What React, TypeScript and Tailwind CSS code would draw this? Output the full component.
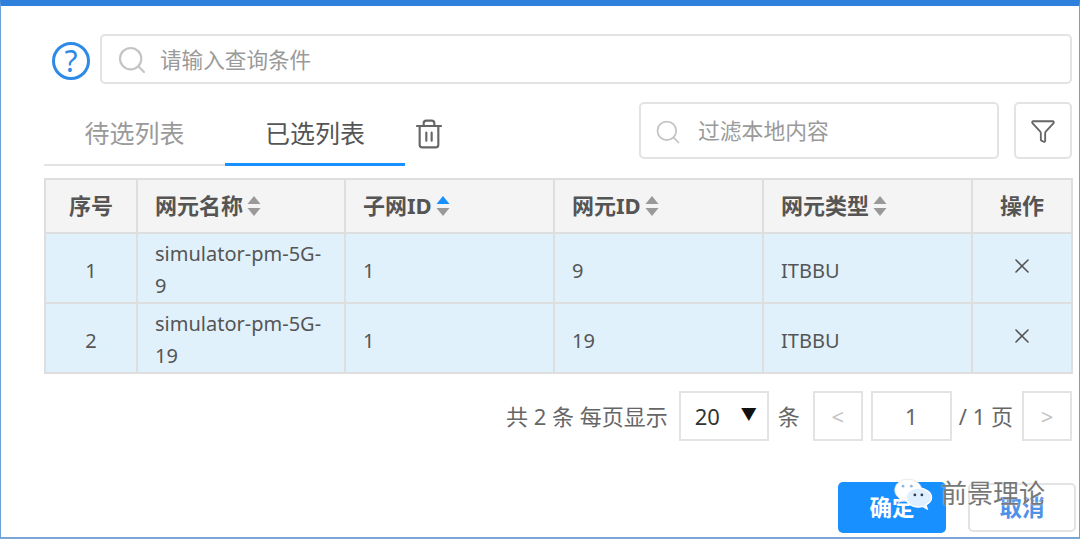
import { Search, Filter, X, Trash2 } from "lucide-react";

const font = { fontFamily: '"Noto Sans", "Noto Sans CJK SC", sans-serif' };

const SortIcon = ({ active = false }: { active?: boolean }) => (
  <svg width="14" height="22" viewBox="0 0 14 22" className="ml-[4px] mb-[-1px] shrink-0">
    <path d="M7 1 L13.5 9 H0.5 Z" fill={active ? "#1890ff" : "#999999"} />
    <path d="M7 21 L13.5 13 H0.5 Z" fill="#999999" />
  </svg>
);

const HeadCell = ({ label, active }: { label: string; active?: boolean }) => (
  <th className="border-2 border-[#dedede] px-[17px] pb-[2px] text-left font-bold">
    <div className="flex items-center">
      <span>{label}</span>
      <SortIcon active={active} />
    </div>
  </th>
);

const rows = [
  { no: "1", name: "simulator-pm-5G-", tail: "9", subnet: "1", id: "9" },
  { no: "2", name: "simulator-pm-5G-", tail: "19", subnet: "1", id: "19" },
];

export default function App() {
  return (
    <div
      className="relative flex h-[539px] w-[1080px] flex-col overflow-hidden border-x-[1.5px] border-b-2 border-t-[6px] border-x-[#6f9fd4] border-b-[#7ba6d6] border-t-[#2f80dc] bg-white pl-[43px] pr-[7px] text-[22px] text-[#555555]"
      style={font}
    >
      {/* search */}
      <div className="mt-[28px] flex items-center">
        <div className="ml-[8px] mt-[3px] flex h-[38px] w-[38px] shrink-0 items-center justify-center rounded-full border-[3px] border-[#2d8ae6] text-[30px] leading-none text-[#2d8ae6]">
          ?
        </div>
        <div className="ml-[10px] flex h-[50px] flex-1 items-center rounded-[5px] border-2 border-[#e3e3e3] pl-[14px] pt-[2px]">
          <Search className="h-[32px] w-[32px] text-[#c4c4c4]" strokeWidth={1.6} />
          <span className="ml-[12px] text-[21.6px] text-[#9a9a9a]">请输入查询条件</span>
        </div>
      </div>

      {/* tabs + filter */}
      <div className="mt-[18px] flex items-start">
        <div className="flex h-[64px] shrink-0 flex-col">
          <div className="flex h-[61px] items-center pt-[2px]">
            <div className="flex w-[181px] justify-center text-[25px] text-[#9a9a9a]">待选列表</div>
            <div className="flex w-[180px] justify-center text-[25px] text-[#555555]">已选列表</div>
          </div>
          <div className="flex">
            <div className="mt-px h-[2px] w-[181px] bg-[#e3e3e3]" />
            <div className="h-[3px] w-[180px] bg-[#1890ff]" />
          </div>
        </div>
        <Trash2 className="ml-[8px] mt-[16px] h-[32px] w-[32px] shrink-0 text-[#666666]" strokeWidth={1.6} />
        <div className="ml-[194px] flex h-[57px] w-[360px] shrink-0 items-center rounded-[5px] border-2 border-[#e3e3e3] pl-[13px] pt-[2px]">
          <Search className="h-[28px] w-[28px] text-[#c4c4c4]" strokeWidth={1.5} />
          <span className="ml-[16px] text-[21.8px] text-[#9a9a9a]">过滤本地内容</span>
        </div>
        <div className="ml-[15px] flex h-[57px] w-[58px] shrink-0 items-center justify-center rounded-[5px] border-2 border-[#e3e3e3]">
          <Filter className="h-[26px] w-[26px] text-[#666666]" strokeWidth={1.7} />
        </div>
      </div>

      {/* table */}
      <table className="mt-[12px] w-[1027px] table-fixed border-collapse text-[#555555]">
        <colgroup>
          <col className="w-[92px]" />
          <col className="w-[208px]" />
          <col className="w-[209px]" />
          <col className="w-[209px]" />
          <col className="w-[209px]" />
          <col className="w-[100px]" />
        </colgroup>
        <thead>
          <tr className="h-[54px] bg-[#f4f4f4]">
            <th className="border-2 border-[#dedede] pb-[2px] text-center font-bold">序号</th>
            <HeadCell label="网元名称" />
            <HeadCell label="子网ID" active />
            <HeadCell label="网元ID" />
            <HeadCell label="网元类型" />
            <th className="border-2 border-[#dedede] pb-[2px] text-center font-bold">操作</th>
          </tr>
        </thead>
        <tbody className="text-[20px]">
          {rows.map((r) => (
            <tr key={r.no} className="h-[70px] bg-[#e1f1fc]">
              <td className="border-2 border-[#dedede] pt-[6px] text-center">{r.no}</td>
              <td className="whitespace-nowrap border-2 border-[#dedede] px-[17px] pt-[4px] text-[20px] leading-[32px]">
                {r.name}
                <br />
                {r.tail}
              </td>
              <td className="border-2 border-[#dedede] px-[17px] pt-[6px]">{r.subnet}</td>
              <td className="border-2 border-[#dedede] px-[17px] pt-[6px]">{r.id}</td>
              <td className="border-2 border-[#dedede] px-[17px] pt-[6px]">ITBBU</td>
              <td className="border-2 border-[#dedede] pb-[5px]">
                <X className="mx-auto h-[24px] w-[24px] text-[#555555]" strokeWidth={1.6} />
              </td>
            </tr>
          ))}
        </tbody>
      </table>

      {/* pagination */}
      <div className="mt-[17px] flex items-center justify-end text-[#666666]">
        <span>共 2 条 每页显示</span>
        <div className="ml-[11px] flex h-[50px] w-[90px] items-center justify-between border-2 border-[#e3e3e3] pl-[14px] pr-[10px] text-[#333333]">
          <span>20</span>
          <span className="mb-[4px] text-[16px] text-[#111111]">▼</span>
        </div>
        <span className="ml-[9px]">条</span>
        <div className="ml-[13px] flex h-[50px] w-[50px] items-center justify-center border-2 border-[#e3e3e3] text-[#c4c4c4]">&lt;</div>
        <div className="ml-[8px] flex h-[50px] w-[81px] items-center justify-center border-2 border-[#e3e3e3]">1</div>
        <span className="ml-[7px]">/ 1 页</span>
        <div className="ml-[9px] flex h-[50px] w-[50px] items-center justify-center border-2 border-[#e3e3e3] text-[#c4c4c4]">&gt;</div>
      </div>

      {/* actions */}
      <div className="mr-[-4px] mt-[41px] flex items-center justify-end">
        <button className="h-[51px] w-[108px] rounded-[5px] bg-[#1890ff] text-[22.5px] font-bold text-white" style={font}>确定</button>
        <button className="ml-[22px] h-[49px] w-[108px] rounded-[5px] border-2 border-[#e3e3e3] text-[22.5px] font-bold text-[#4f90e8]" style={font}>取消</button>
      </div>

      {/* watermark */}
      <div className="absolute left-[892px] top-[468px] flex items-center">
        <svg width="42" height="32" viewBox="0 0 48 36">
          <path d="M17 1C8.5 1 2 6.5 2 13.5c0 4 2 7 5.5 9.5L6 28l6-3c2 .6 4 .9 6 .9 8 0 15-5.500 15-12.400S25.500 1 17 1Z" fill="#ffffff" stroke="#dddddd" strokeWidth="0.8" />
          <circle cx="11.500" cy="9" r="1.500" fill="#8cb4dc" />
          <circle cx="21" cy="9" r="1.500" fill="#8cb4dc" />
          <path d="M29 11c-8 0-14 5-14 11s6 11 14 11c1.800 0 3.500-.3 5-.8l5 2.800-1.300-4.600C41.500 28.400 44 25.500 44 22c0-6-7-11-15-11Z" fill="#e0efff" stroke="#ffffff" strokeWidth="1.600" />
          <circle cx="25" cy="19" r="1.600" fill="#333f55" />
          <circle cx="33" cy="19" r="1.600" fill="#333f55" />
        </svg>
        <span className="ml-[6px] text-[26px] text-[#777777] [text-shadow:0_0_2px_#ffffff]">前景理论</span>
      </div>
    </div>
  );
}
